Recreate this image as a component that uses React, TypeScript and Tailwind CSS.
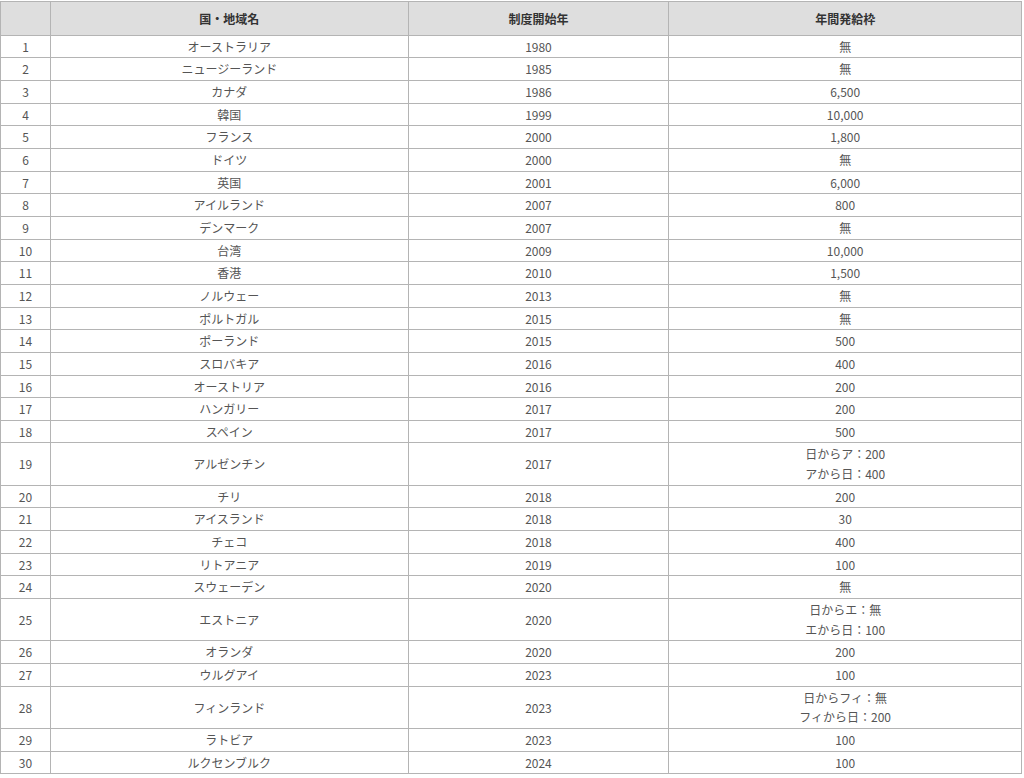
import React from "react";

type Row = { no: number; name: string; year: number; quota: string[] };

const ROWS: Row[] = [
  { no: 1, name: "オーストラリア", year: 1980, quota: ["無"] },
  { no: 2, name: "ニュージーランド", year: 1985, quota: ["無"] },
  { no: 3, name: "カナダ", year: 1986, quota: ["6,500"] },
  { no: 4, name: "韓国", year: 1999, quota: ["10,000"] },
  { no: 5, name: "フランス", year: 2000, quota: ["1,800"] },
  { no: 6, name: "ドイツ", year: 2000, quota: ["無"] },
  { no: 7, name: "英国", year: 2001, quota: ["6,000"] },
  { no: 8, name: "アイルランド", year: 2007, quota: ["800"] },
  { no: 9, name: "デンマーク", year: 2007, quota: ["無"] },
  { no: 10, name: "台湾", year: 2009, quota: ["10,000"] },
  { no: 11, name: "香港", year: 2010, quota: ["1,500"] },
  { no: 12, name: "ノルウェー", year: 2013, quota: ["無"] },
  { no: 13, name: "ポルトガル", year: 2015, quota: ["無"] },
  { no: 14, name: "ポーランド", year: 2015, quota: ["500"] },
  { no: 15, name: "スロバキア", year: 2016, quota: ["400"] },
  { no: 16, name: "オーストリア", year: 2016, quota: ["200"] },
  { no: 17, name: "ハンガリー", year: 2017, quota: ["200"] },
  { no: 18, name: "スペイン", year: 2017, quota: ["500"] },
  { no: 19, name: "アルゼンチン", year: 2017, quota: ["日からア：200", "アから日：400"] },
  { no: 20, name: "チリ", year: 2018, quota: ["200"] },
  { no: 21, name: "アイスランド", year: 2018, quota: ["30"] },
  { no: 22, name: "チェコ", year: 2018, quota: ["400"] },
  { no: 23, name: "リトアニア", year: 2019, quota: ["100"] },
  { no: 24, name: "スウェーデン", year: 2020, quota: ["無"] },
  { no: 25, name: "エストニア", year: 2020, quota: ["日からエ：無", "エから日：100"] },
  { no: 26, name: "オランダ", year: 2020, quota: ["200"] },
  { no: 27, name: "ウルグアイ", year: 2023, quota: ["100"] },
  { no: 28, name: "フィンランド", year: 2023, quota: ["日からフィ：無", "フィから日：200"] },
  { no: 29, name: "ラトビア", year: 2023, quota: ["100"] },
  { no: 30, name: "ルクセンブルク", year: 2024, quota: ["100"] },
];

const cell = "border border-[#b4b4b4] px-2 py-px text-center align-middle";
const head = "border border-[#b4b4b4] px-2 py-[6.5px] text-center font-bold text-[#333]";

export default function App() {
  return (
    <div
      className="w-[1024px] h-[778px] bg-white pt-px pr-[2px]"
      style={{ fontFamily: '"Noto Sans CJK JP", "Noto Sans", sans-serif' }}
    >
      <table className="w-[1022px] border-collapse border border-[#cfcfcf] text-[12px] leading-[19.66px] text-[#555]">
        <colgroup>
          <col className="w-[50px]" />
          <col className="w-[358px]" />
          <col className="w-[261px]" />
          <col className="w-[353px]" />
        </colgroup>
        <thead>
          <tr className="bg-[#dedede]">
            <th className={head}></th>
            <th className={head}>国・地域名</th>
            <th className={head}>制度開始年</th>
            <th className={head}>年間発給枠</th>
          </tr>
        </thead>
        <tbody>
          {ROWS.map((r) => (
            <tr key={r.no}>
              <td className={cell}>{r.no}</td>
              <td className={cell}>{r.name}</td>
              <td className={cell}>{r.year}</td>
              <td className={cell}>
                {r.quota.map((q) => (
                  <div key={q}>{q}</div>
                ))}
              </td>
            </tr>
          ))}
        </tbody>
      </table>
    </div>
  );
}
